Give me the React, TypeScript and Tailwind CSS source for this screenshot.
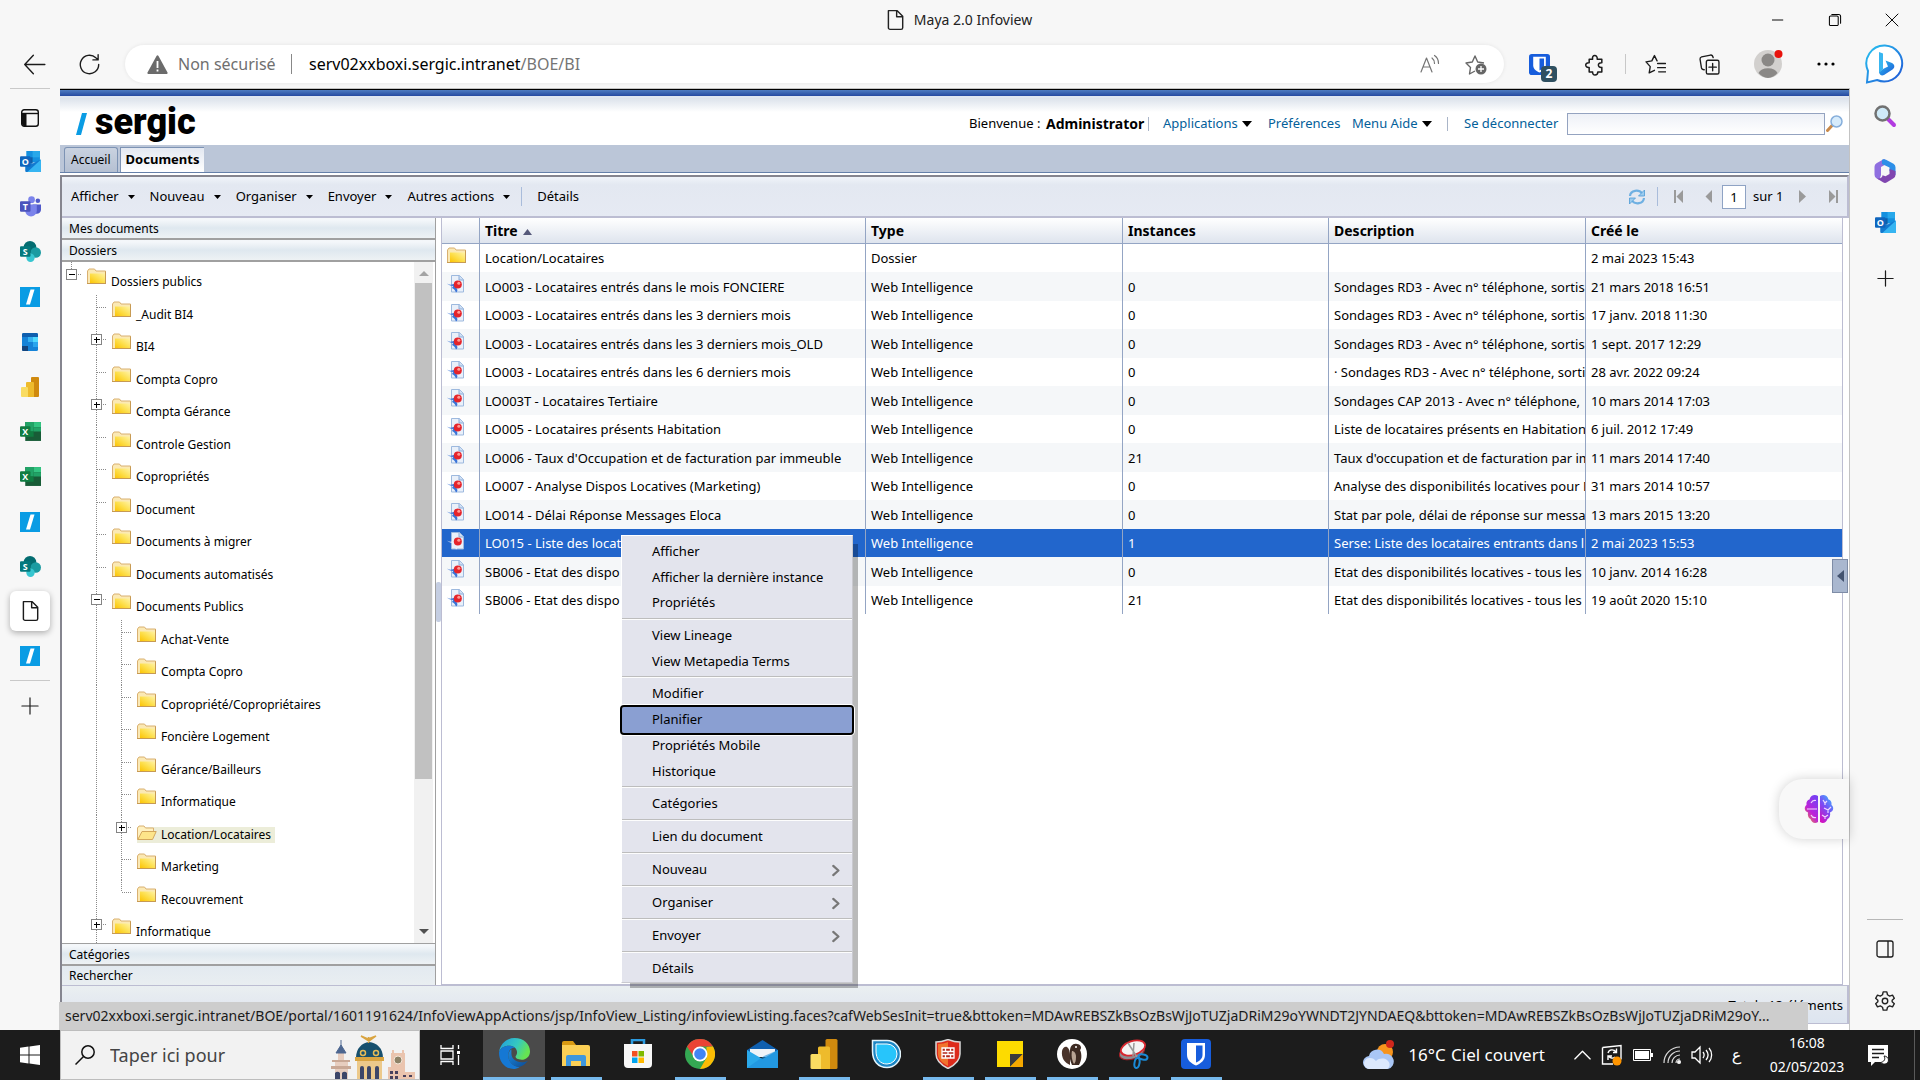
import React from "react";

type NodeProps = { label: string; level: number; toggle?: "+" | "-"; last?: boolean; open?: boolean };

const tree: NodeProps[] = [
  { label: "Dossiers publics", level: 0, toggle: "-" },
  { label: "_Audit BI4", level: 1 },
  { label: "BI4", level: 1, toggle: "+" },
  { label: "Compta Copro", level: 1 },
  { label: "Compta Gérance", level: 1, toggle: "+" },
  { label: "Controle Gestion", level: 1 },
  { label: "Copropriétés", level: 1 },
  { label: "Document", level: 1 },
  { label: "Documents à migrer", level: 1 },
  { label: "Documents automatisés", level: 1 },
  { label: "Documents Publics", level: 1, toggle: "-" },
  { label: "Achat-Vente", level: 2 },
  { label: "Compta Copro", level: 2 },
  { label: "Copropriété/Copropriétaires", level: 2 },
  { label: "Foncière Logement", level: 2 },
  { label: "Gérance/Bailleurs", level: 2 },
  { label: "Informatique", level: 2 },
  { label: "Location/Locataires", level: 2, toggle: "+", open: true },
  { label: "Marketing", level: 2 },
  { label: "Recouvrement", level: 2, last: true },
  { label: "Informatique", level: 1, toggle: "+" },
];

const rd3 = "Sondages RD3 - Avec n° téléphone, sortis";
const WI = "Web Intelligence";
const SELECTED = 10;

const rows = [
  ["Location/Locataires", "Dossier", "", "", "2 mai 2023 15:43"],
  ["LO003 - Locataires entrés dans le mois FONCIERE", WI, "0", rd3, "21 mars 2018 16:51"],
  ["LO003 - Locataires entrés dans les 3 derniers mois", WI, "0", rd3, "17 janv. 2018 11:30"],
  ["LO003 - Locataires entrés dans les 3 derniers mois_OLD", WI, "0", rd3, "1 sept. 2017 12:29"],
  ["LO003 - Locataires entrés dans les 6 derniers mois", WI, "0", "· " + rd3, "28 avr. 2022 09:24"],
  ["LO003T - Locataires Tertiaire", WI, "0", "Sondages CAP 2013 - Avec n° téléphone,", "10 mars 2014 17:03"],
  ["LO005 - Locataires présents Habitation", WI, "0", "Liste de locataires présents en Habitation,", "6 juil. 2012 17:49"],
  ["LO006 - Taux d'Occupation et de facturation par immeuble", WI, "21", "Taux d'occupation et de facturation par im", "11 mars 2014 17:40"],
  ["LO007 - Analyse Dispos Locatives (Marketing)", WI, "0", "Analyse des disponibilités locatives pour M", "31 mars 2014 10:57"],
  ["LO014 - Délai Réponse Messages Eloca", WI, "0", "Stat par pole, délai de réponse sur messa", "13 mars 2015 13:20"],
  ["LO015 - Liste des locat", WI, "1", "Serse: Liste des locataires entrants dans l", "2 mai 2023 15:53"],
  ["SB006 - Etat des dispo", WI, "0", "Etat des disponibilités locatives - tous les", "10 janv. 2014 16:28"],
  ["SB006 - Etat des dispo", WI, "21", "Etat des disponibilités locatives - tous les", "19 août 2020 15:10"],
];

const menuGroups = [
  ["Afficher", "Afficher la dernière instance", "Propriétés"],
  ["View Lineage", "View Metapedia Terms"],
  ["Modifier", "Planifier", "Propriétés Mobile", "Historique"],
  ["Catégories"],
  ["Lien du document"],
  ["Nouveau"],
  ["Organiser"],
  ["Envoyer"],
  ["Détails"],
];
const submenus = ["Nouveau", "Organiser", "Envoyer"];

const statusUrl =
  "serv02xxboxi.sergic.intranet/BOE/portal/1601191624/InfoViewAppActions/jsp/InfoView_Listing/infoviewListing.faces?cafWebSesInit=true&bttoken=MDAwREBSZkBsOzBsWjJoTUZjaDRiM29oYWNDT2JYNDAEQ&bttoken=MDAwREBSZkBsOzBsWjJoTUZjaDRiM29oY...";

/* ---------- small icons ---------- */

const Line = ({ d, size = 20, w = 1.3, className = "" }: { d: string; size?: number; w?: number; className?: string }) => (
  <svg width={size} height={size} viewBox="0 0 20 20" fill="none" stroke="currentColor" strokeWidth={w} strokeLinecap="round" strokeLinejoin="round" className={"shrink-0 " + className}>
    <path d={d} />
  </svg>
);

const Caret = ({ w = 7 }: { w?: number }) => (
  <svg width={w} height={w === 7 ? 4 : 6} viewBox="0 0 10 6" preserveAspectRatio="none" className="shrink-0">
    <path d="M0 0h10L5 6z" fill="#000" />
  </svg>
);

const Folder = () => (
  <svg width="19" height="17" viewBox="0 0 19 17" className="shrink-0">
    <defs>
      <linearGradient id="fold" x1="0" y1="1" x2="1" y2="0">
        <stop offset="0" stopColor="#fcc200" />
        <stop offset=".5" stopColor="#fddf4c" />
        <stop offset="1" stopColor="#fff3a6" />
      </linearGradient>
    </defs>
    <path d="M.5 15.500V3l1.500-2h5.500L9 3h9.500v12.500z" fill="#fbe9b4" stroke="#d9b071" />
    <path d="M3 5.500h15v10H3z" fill="url(#fold)" />
    <path d="M0 15.500h19M18.500 3.500v12" stroke="#c79a53" />
  </svg>
);

const FolderOpen = () => (
  <svg width="20" height="16" viewBox="0 0 20 16" className="shrink-0">
    <path d="M.5 14.500V3l1.500-2h5l1.500 2h8v4" fill="#fff1c0" stroke="#d9b071" />
    <path d="M.8 14.500L5 6.500h14.200L15.500 14.500z" fill="#fde58a" stroke="#d3a75c" />
  </svg>
);

const WebiIcon = ({ selected }: { selected: boolean }) => (
  <svg width="19" height="19" viewBox="0 0 19 19">
    <path d="M4.500.5H12.500l4 4v12.500h-12z" fill="#e9f0fa" stroke="#9db9de" />
    <path d="M12 .5V5h4.500" fill="#cfdff3" stroke="#8cadd9" />
    <path d="M0 8.500c3 1.800 5.500 1.500 8-.5-.5 2 0 3.500 1.500 5 1.500 2 1 3.500-.5 4.500-.8-2.500-2-3.500-4-4.500l1.200-2C3.500 11 1.500 10 0 8.500z" fill={selected ? "#e8effb" : "#3a74d8"} />
    <circle cx="10.800" cy="9.500" r="4" fill="#e5242b" />
    <circle cx="11.800" cy="8.200" r="1.500" fill="#ff9a94" />
  </svg>
);

const SergicIcon = () => (
  <svg width="20" height="20" viewBox="0 0 20 20">
    <path d="M0 0h20v20H0z" fill="#0a9ce4" />
    <path d="M10.500 2.500h4L10 17.500H6z" fill="#fff" />
  </svg>
);

const Badge = ({ fill, letter, x = 0 }: { fill: string; letter: string; x?: number }) => (
  <>
    <rect x={x} y="5" width="10" height="10" rx="1" fill={fill} />
    <text x={x + 5} y="13" textAnchor="middle" fontSize="8.500" fontWeight="700" fontFamily="Open Sans, sans-serif" fill="#fff">
      {letter}
    </text>
  </>
);

const OutlookIcon = () => (
  <svg width="21" height="21" viewBox="0 0 20 20">
    <path d="M6 0h13v11H6z" fill="#1490df" />
    <path d="M12 0h7v6h-7z" fill="#28a8ea" />
    <path d="M6 6h6v6H6z" fill="#0f5ea8" />
    <path d="M5 11l7 1 8-4v11a1 1 0 0 1-1 1H6a1 1 0 0 1-1-1z" fill="#1279cf" />
    <path d="M20 8v11a1 1 0 0 1-1 1H7z" fill="#36b5f2" />
    <Badge fill="#0f65bd" letter="O" />
  </svg>
);

const TeamsIcon = () => (
  <svg width="21" height="21" viewBox="0 0 20 20">
    <circle cx="11" cy="3.500" r="3.200" fill="#7b83eb" />
    <circle cx="17" cy="4.500" r="2.200" fill="#5059c9" />
    <path d="M12 8h8v5a4 4 0 0 1-4 4h-4z" fill="#5059c9" />
    <path d="M5 8h11v6a5.500 5.500 0 0 1-11 0z" fill="#7b83eb" />
    <Badge fill="#4b53bc" letter="T" />
  </svg>
);

const SharepointIcon = () => (
  <svg width="21" height="21" viewBox="0 0 20 20">
    <circle cx="9.500" cy="6" r="6" fill="#036c70" />
    <circle cx="15" cy="11" r="5" fill="#1a9ba1" />
    <circle cx="10" cy="16" r="4" fill="#37c6d0" />
    <Badge fill="#03787c" letter="S" />
  </svg>
);

const ExcelIcon = () => (
  <svg width="21" height="21" viewBox="0 0 20 20">
    <path d="M5 1h15v18H5z" fill="#185c37" />
    <path d="M5 1h8v5H5zM5 6h8v4H5z" fill="#21a366" />
    <path d="M13 1h7v5h-7z" fill="#33c481" />
    <path d="M13 6h7v4h-7z" fill="#21a366" />
    <path d="M5 10h8v5H5z" fill="#107c41" />
    <Badge fill="#107c41" letter="X" />
  </svg>
);

const BluesIcon = () => (
  <svg width="16" height="18" viewBox="0 0 16 18">
    <rect width="16" height="18" rx="1.500" fill="#1583d8" />
    <path d="M0 1.500A1.500 1.500 0 0 1 1.500 0h13A1.500 1.500 0 0 1 16 1.500V4H0z" fill="#0f5fae" />
    <path d="M6 4h5v5H6z" fill="#35b1f1" />
    <path d="M11 4h5v5h-5z" fill="#50d9ff" />
    <path d="M11 9h5v5h-5z" fill="#2aa5ee" />
    <path d="M0 13h6v5H1.500A1.500 1.500 0 0 1 0 16.500z" fill="#14447d" />
  </svg>
);

const PowerBi = ({ size = 20 }: { size?: number }) => (
  <svg width={size} height={size} viewBox="0 0 20 20">
    <rect x="11" y="0" width="8" height="20" rx="1" fill="#d08a0e" />
    <path d="M6 6a1 1 0 0 1 1-1h6a1 1 0 0 1 1 1v14H6z" fill="#eebb2c" />
    <path d="M1 11a1 1 0 0 1 1-1h5a1 1 0 0 1 1 1v9H2a1 1 0 0 1-1-1z" fill="#f9dc62" />
  </svg>
);

const docPath = "M4 1.500h8L17 6.500V17a1.500 1.500 0 0 1-1.500 1.500h-10A1.500 1.500 0 0 1 4 17zM11.500 1.500V7H17";

const Bitwarden = ({ size }: { size: number }) => (
  <svg width={size} height={size} viewBox="0 0 30 30">
    <rect width="30" height="30" rx="4" fill="#175ddc" />
    <path d="M6 4h18v12c0 5-4 8.500-9 10.500C10 24.500 6 21 6 16z" fill="#fff" />
    <path d="M15 6.500h6.500V16c0 3.500-3 6-6.500 7.500z" fill="#175ddc" />
  </svg>
);

const sideIcons = [OutlookIcon, TeamsIcon, SharepointIcon, SergicIcon, BluesIcon, PowerBi, ExcelIcon, ExcelIcon, SergicIcon, SharepointIcon];

/* ---------- browser chrome ---------- */

const TitleBar = () => (
  <header className="relative flex h-10 shrink-0 items-center justify-center pr-1">
    <div className="flex items-center gap-2 text-sm text-[#222]">
      <Line d={docPath} size={22} />
      <span>Maya 2.0 Infoview</span>
    </div>
    <div className="absolute top-0 right-0 flex h-10 items-center text-black">
      <button aria-label="Réduire" className="flex w-[57px] justify-center">
        <Line d="M3 10h13" size={16} w={1.2} />
      </button>
      <button aria-label="Restaurer" className="flex w-[57px] justify-center">
        <Line d="M3 6.500A1.500 1.500 0 0 1 4.500 5h8A1.500 1.500 0 0 1 14 6.500v9a1.500 1.500 0 0 1-1.500 1.500h-8A1.500 1.500 0 0 1 3 15.500zM6 3h8.500A2.500 2.500 0 0 1 17 5.500V14" size={16} />
      </button>
      <button aria-label="Fermer" className="flex w-[57px] justify-center">
        <Line d="M2.500 2.500l15 15M17.500 2.500l-15 15" size={16} w={1.2} />
      </button>
    </div>
  </header>
);

const AddressBar = () => (
  <div className="flex h-12 shrink-0 items-center text-[#1b1b1b]">
    <button aria-label="Précédent" className="ml-[23px]">
      <Line d="M19 10H1.500M9 2L1.500 10L9 18" size={23} w={1.2} />
    </button>
    <button aria-label="Actualiser" className="ml-8 mr-6">
      <Line d="M18 10a8 8 0 1 1-2.500-5.800L17 5.500M17.500 1.500v4.500h-4.500" size={23} w={1.2} />
    </button>
    <div className="flex h-[38px] flex-1 items-center rounded-full bg-white pr-4 pl-[22px] shadow-[0_0_4px_rgba(0,0,0,0.08)]">
      <svg width="21" height="19" viewBox="0 0 21 19">
        <path d="M9.500 1a1.200 1.200 0 0 1 2 0l9 16.500a1 1 0 0 1-1 1.500h-18a1 1 0 0 1-1-1.500z" fill="#6b6b6b" />
        <path d="M10.500 6v7M10.500 14.500v2" stroke="#fff" strokeWidth="1.800" />
      </svg>
      <span className="ml-[10px] w-[113px] text-base text-[#6f6f6f]">Non sécurisé</span>
      <span className="h-5 w-px bg-[#888]" />
      <div role="textbox" aria-label="Adresse" className="ml-[17px] flex-1 text-base text-black">
        serv02xxboxi.sergic.intranet<span className="text-[#757575]">/BOE/BI</span>
      </div>
      <button aria-label="Lecture à voix haute" className="mr-6 text-[#757575]">
        <Line d="M1 18L6.500 4L12 18M3 13h7M12 4c2 1.500 2.500 3 2.500 5.500M14.500 1.500c3 2 4 4.500 4 8" w={1.2} />
      </button>
      <button aria-label="Ajouter aux favoris" className="text-[#666]">
        <svg width="24" height="24" viewBox="0 0 24 24" fill="none">
          <path d="M11 19l-5.500 3 1-6.500L2 11l6.300-1L11 4l2.700 6 6.300 1" stroke="currentColor" strokeWidth="1.400" strokeLinejoin="round" />
          <circle cx="17" cy="17" r="5.500" fill="currentColor" />
          <path d="M17 14v6M14 17h6" stroke="#fff" strokeWidth="1.300" />
        </svg>
      </button>
    </div>
    <button aria-label="Bitwarden" className="relative ml-[25px] w-7">
      <Bitwarden size={21} />
      <span className="absolute top-3 left-3 flex h-4 w-4 items-center justify-center rounded-sm bg-[#2f5061] text-xs font-bold text-white">2</span>
    </button>
    <button aria-label="Extensions" className="ml-[27px]">
      <Line d="M4.500 5.500H7.500C6.500 1 12 1 11.500 5.500H15.500V8.500C11.500 8 11.500 13 15.500 12.500V16.500H12C12 20 7 20 7.500 16.500H4.500V12.500C.5 13 .5 8 4.500 8.500z" size={23} />
    </button>
    <span className="mr-[19px] ml-[18px] h-5 w-px bg-[#c8c8c8]" />
    <button aria-label="Favoris">
      <Line d="M9 15.500l-5 2.500 1-6L1 7.500l5.500-1L9 1.500l2.500 5M12 9h7.500M12 13h7.500M13 17h6.500" size={21} />
    </button>
    <button aria-label="Collections" className="ml-[33px]">
      <Line d="M7 7.500A1.500 1.500 0 0 1 8.500 6h9A1.500 1.500 0 0 1 19 7.500v10a1.500 1.500 0 0 1-1.500 1.500h-9A1.500 1.500 0 0 1 7 17.500zM13 9v7M9.500 12.500h7M5 15c-2 0-2.500-1-2.700-2L1 5c-.2-1.500.5-2 1.500-2.300L11 1c1.500-.2 2 .5 2.500 2.500" size={21} />
    </button>
    <button aria-label="Profil" className="ml-[34px]">
      <svg width="30" height="30" viewBox="0 0 30 30">
        <circle cx="14" cy="15" r="14" fill="#d2d0ce" />
        <circle cx="14" cy="11" r="6.500" fill="#8a8886" />
        <path d="M4.500 24a10 7 0 0 1 19 0A14 14 0 0 1 14 29a14 14 0 0 1-9.500-5z" fill="#8a8886" />
        <circle cx="24.500" cy="5" r="4" fill="#e8120c" />
      </svg>
    </button>
    <button aria-label="Paramètres et plus" className="ml-[33px]">
      <svg width="18" height="4" viewBox="0 0 18 4">
        <circle cx="2" cy="2" r="1.600" />
        <circle cx="9" cy="2" r="1.600" />
        <circle cx="16" cy="2" r="1.600" />
      </svg>
    </button>
    <button aria-label="Bing" className="mr-[15px] ml-[30px]">
      <svg width="40" height="40" viewBox="0 0 40 40">
        <defs>
          <linearGradient id="bing" x1="0" y1="0" x2="1" y2="1">
            <stop offset="0" stopColor="#28c3f0" />
            <stop offset="1" stopColor="#1f55d6" />
          </linearGradient>
        </defs>
        <path d="M20 1.500a18 18 0 1 1-8 34.500L2 38.500 3 27A18 18 0 0 1 20 1.500z" fill="#fff" stroke="url(#bing)" strokeWidth="2" />
        <path d="M14 8l4 1.500V25l-4 4z" fill="#38b6f0" />
        <path d="M14 28.500l4-3.500 5-2.500-2.500-6 6.500 2.500c3 1.500 3 5 .5 6.500L19 31c-2 1-4 .5-5-2.500z" fill="url(#bing)" />
      </svg>
    </button>
  </div>
);

const LeftRail = () => (
  <nav className="flex w-[60px] shrink-0 flex-col items-center">
    <span className="h-px w-10 bg-[#c9c9c9]" />
    <button aria-label="Onglets" className="mt-2 flex h-[42px] items-center">
      <svg width="18" height="18" viewBox="0 0 18 18" fill="none">
        <rect x=".7" y=".7" width="16.600" height="16.600" rx="2.500" stroke="#111" strokeWidth="1.400" />
        <path d="M1 4.500h16" stroke="#111" strokeWidth="1.400" />
        <path d="M1 4.500h4.500V17H3a2 2 0 0 1-2-2z" fill="#111" />
      </svg>
    </button>
    {sideIcons.map((Icon, i) => (
      <button key={i} aria-label={"Onglet " + (i + 1)} className="flex h-[45px] w-10 items-center justify-center">
        <Icon />
      </button>
    ))}
    <button aria-label="Maya 2.0 Infoview" className="my-0.5 flex h-10 w-10 items-center justify-center rounded-md bg-white shadow-[0_2px_6px_rgba(0,0,0,0.3)]">
      <Line d={docPath} size={22} />
    </button>
    <button aria-label="Sergic" className="flex h-[45px] items-center">
      <SergicIcon />
    </button>
    <span className="mt-0.5 h-px w-10 bg-[#c9c9c9]" />
    <button aria-label="Nouvel onglet" className="mt-4">
      <Line d="M10 1v18M1 10h18" size={18} />
    </button>
  </nav>
);

const RightRail = () => (
  <aside className="flex w-[71px] shrink-0 flex-col items-center border-l border-[#c3c3c3]">
    <button aria-label="Rechercher" className="mt-4">
      <svg width="24" height="24" viewBox="0 0 24 24" fill="none">
        <path d="M15 15l6 6" stroke="#b23be0" strokeWidth="4" strokeLinecap="round" />
        <circle cx="9.500" cy="9.500" r="7" fill="#cfeaf8" stroke="#717171" strokeWidth="2.500" />
      </svg>
    </button>
    <button aria-label="Microsoft 365" className="mt-[30px]">
      <svg width="24" height="26" viewBox="0 0 24 26">
        <path d="M11 1L3.500 5.200A4 4 0 0 0 1.500 8.700v8a4 4 0 0 0 2 3.500l3 1.700L8 17V9l8-4.500z" fill="#8f6fe0" />
        <path d="M9 1.800a4 4 0 0 1 4 0l7.500 4a4 4 0 0 1 2 3.400V17l-6-4V9.500L9 6z" fill="#2d8fe8" />
        <path d="M22.500 13v4a4 4 0 0 1-2 3.300L14 24.300a4 4 0 0 1-4 0l-6.500-4c4 .8 6-1 6-3l3 1 4-2.300V11z" fill="#8046b0" />
      </svg>
    </button>
    <button aria-label="Outlook" className="mt-7">
      <OutlookIcon />
    </button>
    <button aria-label="Personnaliser" className="mt-9">
      <Line d="M10 2v16M2 10h16" size={19} />
    </button>
    <span className="mt-auto h-px w-9 bg-[#b7b7b7]" />
    <button aria-label="Masquer la barre" className="mt-[19px]">
      <Line d="M4 2h12a2 2 0 0 1 2 2v12a2 2 0 0 1-2 2H4a2 2 0 0 1-2-2V4a2 2 0 0 1 2-2zM13 2v16" />
    </button>
    <button aria-label="Paramètres" className="mt-[31px] mb-[18px]">
      <svg width="22" height="22" viewBox="0 0 24 24" fill="none" stroke="#222" strokeWidth="1.500" strokeLinejoin="round">
        <path d="M10 2h4l.7 3.200 2.400 1.400 3.100-1 2 3.500L19.800 11.300v1.400l2.400 2.200-2 3.500-3.100-1-2.400 1.400L14 22h-4l-.7-3.200-2.400-1.400-3.100 1-2-3.500 2.400-2.200v-1.400L1.800 9.100l2-3.500 3.100 1 2.400-1.400z" />
        <circle cx="12" cy="12" r="3" />
      </svg>
    </button>
  </aside>
);

/* ---------- portal ---------- */

const PortalHeader = () => (
  <>
    <div className="h-px bg-[#c3c3c3]" />
    <div className="h-px bg-black" />
    <div className="h-1.5 bg-linear-to-b from-[#4e7cc0] to-[#2549a0]" />
    <div className="h-0.5 bg-[#dfe6f0]" />
    <div className="flex h-[47px] items-center bg-linear-to-b from-[#dbe2eb] via-white via-30% to-white pr-1.5 pl-4 text-[13px]">
      <a href="#" className="flex items-center gap-2">
        <svg width="11" height="22" viewBox="0 0 11 22" className="mt-1">
          <path d="M6 0h5L5 22H0z" fill="#0a9ce4" />
        </svg>
        <span className="font-['Roboto'] text-4xl leading-10 font-black text-black">sergic</span>
      </a>
      <div className="ml-auto flex items-center pt-1 text-[#03609a]">
        <span className="w-[77px] text-black">Bienvenue :</span>
        <b className="w-[102px] text-sm text-black">Administrator</b>
        <span className="h-[14px] w-px bg-[#aab5c8]" />
        <button className="flex w-[103px] items-center gap-1 pl-[14px]">
          Applications <Caret w={10} />
        </button>
        <a href="#" className="ml-4 w-[84px]">Préférences</a>
        <button className="flex w-[95px] items-center gap-1">
          Menu Aide <Caret w={10} />
        </button>
        <span className="h-[14px] w-px bg-[#aab5c8]" />
        <a href="#" className="ml-4 w-[103px]">Se déconnecter</a>
        <input aria-label="Rechercher" className="h-[22px] w-[258px] border border-[#94a3c0] bg-linear-to-b from-[#eef1f7] to-white px-1" />
        <button aria-label="Lancer la recherche" className="ml-px">
          <svg width="17" height="17" viewBox="0 0 17 17" fill="none">
            <path d="M1.500 15.500L6.500 10" stroke="#c98a4b" strokeWidth="3" strokeLinecap="round" />
            <circle cx="10.500" cy="6.500" r="5.500" fill="#d6ebfb" stroke="#86aedb" strokeWidth="1.500" />
          </svg>
        </button>
      </div>
    </div>
    <div className="flex h-7 items-end gap-0.5 border-b border-[#6580a9] bg-[#bbc6d8] pl-1">
      <button className="h-[25px] rounded-t-[3px] border border-b-0 border-[#7d93b4] bg-linear-to-b from-[#c9d2e0] to-[#b5c0d2] px-1.5 text-xs text-black">Accueil</button>
      <button className="h-[25px] border-t border-l border-[#7d93b4] bg-linear-to-b from-[#e3e8f1] to-white px-[5px] text-[13px] font-bold text-black">Documents</button>
    </div>
    <div className="h-0.5 bg-white" />
  </>
);

const toolbarMenus = ["Afficher", "Nouveau", "Organiser", "Envoyer", "Autres actions"];

const PageArrow = ({ label, d }: { label: string; d: string }) => (
  <button aria-label={label}>
    <svg width="9" height="13" viewBox="0 0 9 13" fill="#9a9a9a">
      <path d={d} />
    </svg>
  </button>
);

const Toolbar = () => (
  <div className="flex h-[43px] shrink-0 items-center border-t-2 border-r-2 border-b-2 border-t-[#85858f] border-r-[#bcbdd2] border-b-[#bcbdd2] bg-linear-to-b from-[#f0f4f9] via-[#e3e8f1] via-20% to-[#e6eaf3] pr-[3px] pl-[9px] text-[13px] text-black">
    <div className="flex items-center gap-[15px]">
      {toolbarMenus.map((m) => (
        <button key={m} className="flex items-center gap-[9px]">
          {m} <Caret />
        </button>
      ))}
      <span className="-ml-1 h-[19px] w-px bg-[#a9bcdb]" />
      <button>Détails</button>
    </div>
    <div className="ml-auto flex items-center">
      <button aria-label="Actualiser la liste">
        <svg width="18" height="16" viewBox="0 0 18 16" fill="none">
          <path d="M2 7C2.500 1 11 0 14 4.500M16 9c-.5 6-9 7-12 2.500" stroke="#6fb0e2" strokeWidth="2.200" />
          <path d="M16.500 1v6h-6zM1.500 15V9h6z" fill="#9bcbee" stroke="#4c9bd6" strokeWidth=".8" />
        </svg>
      </button>
      <span className="mr-4 ml-[11px] h-[19px] w-px bg-[#a9bcdb]" />
      <div className="flex items-center gap-[21px]">
        <PageArrow label="Première page" d="M0 0h2v13H0zM9 0v13L2.500 6.500z" />
        <PageArrow label="Page précédente" d="M8 0v13L1.500 6.500z" />
      </div>
      <input aria-label="Page" defaultValue="1" className="mr-[7px] ml-[9px] h-6 w-6 border border-[#8fa3c4] bg-white text-center" />
      <span className="w-[46px]">sur 1</span>
      <div className="flex items-center gap-[21px] pr-1.5">
        <PageArrow label="Page suivante" d="M0 0v13L7 6.500z" />
        <PageArrow label="Dernière page" d="M0 0v13L6.500 6.500zM7 0h2v13H7z" />
      </div>
    </div>
  </div>
);

const Guide = ({ toggle, root, last, plain }: { toggle?: string; root?: boolean; last?: boolean; plain?: boolean }) => (
  <svg width="25" height="100%" className="shrink-0" shapeRendering="crispEdges">
    <line x1="9.500" x2="9.500" y1="0" y2={root || last ? 12 : "100%"} stroke="#8a8a8a" strokeDasharray="1 1" />
    {!plain && <line x1="10" x2="20" y1="12.500" y2="12.500" stroke="#8a8a8a" strokeDasharray="1 1" />}
    {toggle && (
      <>
        <rect x="4.500" y="7.500" width="10" height="10" fill="#fff" stroke="#848484" />
        <path d={toggle === "+" ? "M7 12.500h6M9.500 10v6" : "M7 12.500h6"} stroke="#000" />
      </>
    )}
  </svg>
);

const TreeRow = ({ label, level, toggle, last, open }: NodeProps) => (
  <li className="flex h-8 odd:h-[33px]">
    {level > 0 && <span className="w-[25px] shrink-0" />}
    {level === 2 && <Guide plain />}
    <Guide toggle={toggle} root={level === 0} last={last} />
    <a href="#" className={open ? "mt-3 flex h-4 gap-[5px] bg-[#ecedd9] pr-1 leading-4" : "flex gap-[5px] leading-4"}>
      {open ? (
        <span className="-mt-0.5 w-[19px]">
          <FolderOpen />
        </span>
      ) : (
        <span className="mt-1.5 w-[19px]">
          <Folder />
        </span>
      )}
      <span className={open ? "" : "mt-3"}>{label}</span>
    </a>
  </li>
);

const PanelTitle = ({ children }: { children: React.ReactNode }) => (
  <button className="flex h-[22px] shrink-0 items-end border-b-2 border-[#a0a0a0] bg-linear-to-b from-[#f4f7fa] from-10% via-[#dfe8ef] via-50% to-[#eef2f4] pb-px pl-[7px] leading-4">
    {children}
  </button>
);

const LeftPanel = () => (
  <div className="flex w-[374px] shrink-0 flex-col border-r border-[#a0a0a0] bg-white text-xs text-black">
    <PanelTitle>Mes documents</PanelTitle>
    <PanelTitle>Dossiers</PanelTitle>
    <div className="flex min-h-0 flex-1">
      <ul className="flex-1 overflow-hidden">
        {tree.map((n, i) => (
          <TreeRow key={i} {...n} />
        ))}
      </ul>
      <div className="mr-0.5 flex w-[19px] flex-col items-center bg-[#f1f1f1]">
        <svg width="10" height="21" viewBox="0 0 10 21">
          <path d="M0 14l5-5 5 5z" fill="#a3a3a3" />
        </svg>
        <span className="h-[496px] w-[17px] bg-[#c1c1c1]" />
        <svg width="10" height="21" viewBox="0 0 10 21" className="mt-auto">
          <path d="M0 7l5 5 5-5z" fill="#505050" />
        </svg>
      </div>
    </div>
    <span className="h-px shrink-0 bg-[#a0a0a0]" />
    <PanelTitle>Catégories</PanelTitle>
    <button className="flex h-[19px] shrink-0 items-center bg-linear-to-b from-[#e3eaf0] to-[#e9eef1] pl-[7px] leading-4">Rechercher</button>
  </div>
);

const columns = ["Titre", "Type", "Instances", "Description", "Créé le"];

const DocTable = () => (
  <table className="w-full table-fixed border-separate border-spacing-0 text-left text-[13px] text-black">
    <colgroup>
      <col className="w-[38px]" />
      <col className="w-[386px]" />
      <col className="w-[257px]" />
      <col className="w-[206px]" />
      <col className="w-[257px]" />
      <col />
    </colgroup>
    <thead>
      <tr className="h-[26px] bg-linear-to-b from-white to-[#dde3ed] text-sm leading-5">
        <th aria-label="Icône" className="border-r border-b border-[#94a5c4] p-0" />
        {columns.map((c) => (
          <th key={c} className="border-r border-b border-[#94a5c4] p-0 pl-[5px] last:border-r-0">
            {c}
            {c === "Titre" && (
              <svg width="9" height="6" viewBox="0 0 9 6" className="ml-[5px] inline-block align-middle">
                <path d="M0 6l4.500-6L9 6z" fill="#55597a" />
              </svg>
            )}
          </th>
        ))}
      </tr>
    </thead>
    <tbody>
      {rows.map((r, i) => (
        <tr key={i} className={i === SELECTED ? "h-7 bg-[#2266cc] text-white" : "h-7 even:h-[29px] even:bg-[#f5f7f9]"}>
          <td className="border-r border-[#94a5c4] p-0 pt-[3px] pl-[5px] align-top">{i === 0 ? <Folder /> : <WebiIcon selected={i === SELECTED} />}</td>
          {r.map((cell, j) => (
            <td key={j} className="overflow-hidden border-r border-[#94a5c4] p-0 pl-[5px] leading-5 whitespace-nowrap last:border-r-0">
              {cell}
            </td>
          ))}
        </tr>
      ))}
    </tbody>
  </table>
);

const ContextMenu = () => (
  <div role="menu" className="absolute top-[317px] left-[179px] z-20 w-[232px] border border-[#c9c9cf] border-t-white border-l-white bg-[#e3e4ed] text-[13px] text-black shadow-[7px_7px_0_-2px_rgba(0,0,0,0.27)]">
    {menuGroups.map((g, i) => (
      <div key={i} className="border-[#fdfdfd] pt-[3px] not-first:border-t">
        <div className={i < menuGroups.length - 1 ? "border-b border-[#bdbdbd] pb-0.5" : ""}>
          {g.map((item) => (
            <button
              key={item}
              role="menuitem"
              className={
                item === "Planifier"
                  ? "relative flex h-[26px] w-full items-center rounded-[2px] bg-[#8a9fd2] pl-[30px] ring-[3px] ring-white outline-2 outline-black"
                  : "flex h-[26px] w-full items-center pr-[9px] pl-[30px] even:h-[25px]"
              }
            >
              {item}
              {submenus.includes(item) && <Line d="M5 3l8 7-8 7" size={13} w={3.5} className="ml-auto text-[#777]" />}
            </button>
          ))}
        </div>
      </div>
    ))}
  </div>
);

const Portal = () => (
  <main className="relative flex min-w-0 flex-1 flex-col bg-white">
    <PortalHeader />
    <div className="flex min-h-0 flex-1 flex-col border-l-2 border-[#85858f]">
      <Toolbar />
      <div className="flex min-h-0 flex-1 bg-white pr-1.5">
        <LeftPanel />
        <div className="flex w-[5px] shrink-0 flex-col justify-center">
          <span className="h-10 rounded-xs bg-[#c5cee2]" />
        </div>
        <section className="relative min-w-0 flex-1 border-r border-b border-l border-[#bcbdd2]">
          <DocTable />
          <ContextMenu />
        </section>
      </div>
      <footer className="mb-1.5 flex h-[39px] shrink-0 items-center justify-end border-t border-r-2 border-b border-[#bcbdd2] bg-linear-to-b from-[#eaeff1] via-[#e3e8f0] to-[#dde5f0] pt-0.5 pr-1 text-[13px] text-black">Total : 13 éléments</footer>
    </div>
    <button aria-label="Ouvrir le panneau" className="absolute top-[471px] right-px flex h-[34px] w-4 items-center justify-center border border-[#7e8ca6] bg-[#a9b7cf]">
      <svg width="7" height="12" viewBox="0 0 7 12">
        <path d="M7 0v12L0 6z" fill="#43536f" />
      </svg>
    </button>
    <button aria-label="Assistant" className="absolute top-[691px] right-0 flex h-[60px] w-[70px] items-center rounded-l-3xl bg-[#f8f8f8] pl-[25px] shadow-[0_0_12px_rgba(0,0,0,0.18)]">
      <svg width="30" height="30" viewBox="0 0 30 30" fill="none">
        <defs>
          <linearGradient id="brainL" x1=".6" y1="0" x2="0" y2="1">
            <stop offset="0" stopColor="#7b3ff2" />
            <stop offset=".5" stopColor="#c022d8" />
            <stop offset="1" stopColor="#f0a020" />
          </linearGradient>
          <linearGradient id="brainR" x1=".8" y1="0" x2=".2" y2="1">
            <stop offset="0" stopColor="#3fb4ff" />
            <stop offset=".5" stopColor="#7a4cf5" />
            <stop offset="1" stopColor="#d312c0" />
          </linearGradient>
        </defs>
        <path d="M14 2v26c-3 2-6 1-7.500-3-2.500-1-3-4-2.500-6.500-4-1.500-4-5.500-1.500-7.500-.5-3.500 1-5 3-5.500C6.500 1 11 0 14 2z" fill="url(#brainL)" />
        <path d="M16 2v26c3 2 6 1 7.500-3 2.500-1 3-4 2.500-6.500 4-1.500 4-5.500 1.500-7.500.5-3.500-1-5-3-5.500C23.500 1 19 0 16 2z" fill="url(#brainR)" />
        <path d="M3 15h10M7 9c1-2 3-3 5-2.500M7 21c1 2 3 3 5 2.500M19 6l2 3 2-2M21 9v2M20 14l4 2 3-3M24 16v3M18 21l3 2 3-2M21 23v2" stroke="#f0d8ff" strokeWidth="1.200" />
      </svg>
    </button>
    <div role="status" className="absolute right-[41px] bottom-0 -left-px h-7 overflow-hidden bg-[#cdcdcd] pl-[6px] text-sm leading-7 whitespace-nowrap text-[#1a1a1a]">
      {statusUrl}
    </div>
  </main>
);

/* ---------- windows taskbar ---------- */

const EdgeIcon = () => (
  <svg width="31" height="31" viewBox="0 0 30 30">
    <defs>
      <linearGradient id="edgeTop" x1="0" y1="0" x2="1" y2=".4">
        <stop offset="0" stopColor="#1f9be0" />
        <stop offset=".6" stopColor="#35c9c0" />
        <stop offset="1" stopColor="#66e352" />
      </linearGradient>
      <linearGradient id="edgeBot" x1="0" y1="0" x2="1" y2="1">
        <stop offset="0" stopColor="#1b8ade" />
        <stop offset="1" stopColor="#0c4a94" />
      </linearGradient>
    </defs>
    <path d="M0 14C1 5 8 0 15 0c9 0 15 6 15 13 0 5-4 8-8 8-4 0-6-1.500-6-3 0-1 1.500-1.500 1.500-4C17.500 10 14 7.500 10 7.500 5 7.500 1 10 0 14z" fill="url(#edgeTop)" />
    <path d="M0 14c1-4 5-6.500 10-6.500 2 0 4 .7 5.500 2C11 9 9 13 9 17c0 6 5 11 11 11-2 1.500-4 2-6 2C6 30 0 23 0 14z" fill="#1578d4" />
    <path d="M12 11c-2 1.500-3 4-3 6 0 7 6 12 12 10.500 3-1 5-3 7-5.500-8 4-16-.5-16-7z" fill="url(#edgeBot)" />
  </svg>
);

const ExplorerIcon = () => (
  <svg width="28" height="26" viewBox="0 0 28 26">
    <path d="M0 2a2 2 0 0 1 2-2h9l3 4H0z" fill="#d99a12" />
    <path d="M0 4h26a2 2 0 0 1 2 2v19H0z" fill="#fbcf55" />
    <path d="M4 25V16a2 2 0 0 1 2-2h16a2 2 0 0 1 2 2v9h-5v-5H9v5z" fill="#3f97dd" />
  </svg>
);

const StoreIcon = () => (
  <svg width="30" height="30" viewBox="0 0 30 30">
    <path d="M9 6V1h12v5" fill="none" stroke="#2c9be0" strokeWidth="2.500" />
    <path d="M1 5h28v20a4 4 0 0 1-4 4H5a4 4 0 0 1-4-4z" fill="#f7f7f7" />
    <path d="M9 12h5.500v5.500H9z" fill="#f25022" />
    <path d="M15.500 12H21v5.500h-5.500z" fill="#7fba00" />
    <path d="M9 18.500h5.500V24H9z" fill="#00a4ef" />
    <path d="M15.500 18.500H21V24h-5.500z" fill="#ffb900" />
  </svg>
);

const ChromeIcon = () => (
  <svg width="30" height="30" viewBox="0 0 30 30">
    <circle cx="15" cy="15" r="15" fill="#34a853" />
    <path d="M2 7.500A15 15 0 0 1 28 7.500H15L9 18z" fill="#ea4335" />
    <path d="M28 7.500A15 15 0 0 1 15 30l6.500-11V8z" fill="#fbbc05" />
    <circle cx="15" cy="15" r="7.500" fill="#fff" />
    <circle cx="15" cy="15" r="5.800" fill="#4285f4" />
  </svg>
);

const MailIcon = () => (
  <svg width="31" height="28" viewBox="0 0 31 28">
    <path d="M0 10L15.500 0 31 10v5H0z" fill="#0f5fae" />
    <path d="M3 9h25v8H3z" fill="#eef3f8" />
    <path d="M0 10l15.500 9L31 10v18H0z" fill="#2ba9ea" />
    <path d="M0 28l17-12L31 10v18z" fill="#1d8ddb" opacity=".6" />
  </svg>
);

const DropIcon = () => (
  <svg width="30" height="30" viewBox="0 0 30 30">
    <path d="M1.500 1.500H16a13.500 13.500 0 0 1 0 27C7 28.500 1.500 22 1.500 12z" fill="#1c86c4" stroke="#e3f4fc" strokeWidth="1.500" />
    <path d="M5 5h11a10 10 0 0 1 0 20C9 25 5 20 5 12z" fill="#27c5fb" stroke="#fff" strokeWidth="1" />
  </svg>
);

const ShieldIcon = () => (
  <svg width="26" height="30" viewBox="0 0 26 30">
    <path d="M1 3c5 0 8-1 12-2.500C17 2 20 3 25 3v12c0 7-5 11-12 14.500C6 26 1 22 1 15z" fill="#dd2b1c" stroke="#d9d9d9" strokeWidth="1.500" />
    <path d="M3 5c4 0 7-1 10-2v24C7 24 3 20 3 15z" fill="#f0742d" />
    <path d="M7 9h12v10H7zM7 12.500h12M7 15.500h12M10.500 9v3.500M15.500 9v3.500M13 12.500v3M10.500 15.500V19M15.500 15.500V19" fill="#b3271a" stroke="#fff" strokeWidth="1.300" />
  </svg>
);

const NoteIcon = () => (
  <svg width="26" height="26" viewBox="0 0 26 26">
    <path d="M0 0h26v26H0z" fill="#fddb00" />
    <path d="M13 26V13h13z" fill="#3b3b3b" />
    <path d="M13 26L26 13v13z" fill="#f5a800" />
  </svg>
);

const BeaverIcon = () => (
  <svg width="30" height="30" viewBox="0 0 30 30">
    <circle cx="15" cy="15" r="15" fill="#fff" />
    <path d="M13 26c-5-2-9-7-8-14 .5-3 3-5 5-4 3 2 3 7 3 10z" fill="#4a342b" />
    <path d="M13 12c0-5 3-8 7-7 4 .5 5 4 3 6 2 4 2 10-1 15h-7c-2-4-3-9-2-14z" fill="#3d2a22" />
    <path d="M15 12c2 0 4 2 4 6s-1 6-2 7c-2-3-3-9-2-13z" fill="#b8a393" />
    <circle cx="19" cy="8" r="1" fill="#fff" />
  </svg>
);

const SnipIcon = () => (
  <svg width="30" height="30" viewBox="0 0 30 30" fill="none">
    <ellipse cx="13" cy="13" rx="13" ry="7" transform="rotate(-18 13 13)" fill="#8d8d92" stroke="#a31f26" />
    <ellipse cx="14" cy="9" rx="12.500" ry="7" transform="rotate(-18 14 9)" fill="#f4f4f4" stroke="#d8272f" strokeWidth="1.800" />
    <path d="M9 4l9 14M15 4l-1 13" stroke="#999" strokeWidth="1.500" />
    <ellipse cx="24" cy="18" rx="4.500" ry="2.500" transform="rotate(12 24 18)" stroke="#1a8ad6" strokeWidth="2" />
    <ellipse cx="18" cy="24" rx="2.500" ry="5" transform="rotate(10 18 24)" stroke="#1a8ad6" strokeWidth="2" />
  </svg>
);

const WeatherIcon = () => (
  <svg width="32" height="30" viewBox="0 0 32 30">
    <circle cx="22" cy="12" r="8" fill="#f7941d" />
    <circle cx="27" cy="4" r="4" fill="#d0271c" />
    <path d="M7 29a6.500 6.500 0 0 1-1-13 8 8 0 0 1 15-2 7.500 7.500 0 0 1 4 15z" fill="#a9c6f5" />
    <path d="M6 29a5.500 5.500 0 0 1 1-11c3 0 4 1 6 3 3-3 8-3 11-1 4 3 3 8 0 9z" fill="#dce9fd" />
  </svg>
);

const Landmark = () => (
  <svg width="86" height="44" viewBox="0 0 86 44">
    <path d="M5 44V27h3v-9l3-5 3 5v9h4v17z" fill="#e7cdbf" />
    <path d="M6 18l5-8 5 8zM11 5v6" fill="#4c6690" stroke="#4c6690" />
    <path d="M2 25h18v2H2zM1 31h20v3H1z" fill="#c9a896" />
    <path d="M5 44v-6a3 3 0 0 1 5 0v6zM12 44v-6a3 3 0 0 1 5 0v6z" fill="#3c4668" />
    <path d="M26 23C26 13 32 8 39 7c8 1 14 6 14 16z" fill="#17506e" />
    <path d="M38.500 8V2M31 1l7 3 8-3-7 5z" fill="#d9a441" stroke="#d9a441" strokeWidth="1.500" />
    <path d="M25 22h29v4H25z" fill="#d9a441" />
    <circle cx="33" cy="18" r="2.500" fill="none" stroke="#e6bb57" strokeWidth="1.500" />
    <circle cx="46" cy="18" r="2.500" fill="none" stroke="#e6bb57" strokeWidth="1.500" />
    <path d="M27 26h25v18H27z" fill="#ecc98b" />
    <path d="M30 44V33a2 2 0 0 1 4 0v11zM37 44V33a2 2 0 0 1 4 0v11zM45 44V33a2 2 0 0 1 4 0v11z" fill="#3c4668" />
    <path d="M61 44V18h14v26zM62 18v-3h2v3zM72 18v-3h2v3zM58 32h12v12H58zM70 37h15v7H70z" fill="#eac4ae" />
    <circle cx="68" cy="25" r="4" fill="#8d8267" stroke="#f5e6d8" />
    <path d="M60 36h3v3h-3zM65 36h3v3h-3zM60 41h3v3h-3zM65 41h3v3h-3zM73 40h3v2h-3zM79 40h3v2h-3z" fill="#47405c" />
  </svg>
);

const apps = [
  { name: "Edge", icon: <EdgeIcon />, running: true, active: true },
  { name: "Explorateur", icon: <ExplorerIcon />, running: true },
  { name: "Store", icon: <StoreIcon /> },
  { name: "Chrome", icon: <ChromeIcon />, running: true },
  { name: "Courrier", icon: <MailIcon /> },
  { name: "Power BI", icon: <PowerBi size={30} />, running: true },
  { name: "Bureau à distance", icon: <DropIcon /> },
  { name: "Pare-feu", icon: <ShieldIcon />, running: true },
  { name: "Pense-bêtes", icon: <NoteIcon />, running: true },
  { name: "DBeaver", icon: <BeaverIcon />, running: true },
  { name: "Capture", icon: <SnipIcon />, running: true },
  { name: "Bitwarden", icon: <Bitwarden size={30} />, running: true },
];

const Taskbar = () => (
  <footer className="flex h-[50px] shrink-0 items-center bg-[#1c1c1c] text-white">
    <button aria-label="Démarrer" className="flex w-[60px] justify-center">
      <svg width="20" height="20" viewBox="0 0 20 20" fill="#fff">
        <path d="M0 2.800L8.500 1.600v8H0zM9.500 1.400L20 0v9.600H9.500zM0 10.500h8.500v8L0 17.300zM9.500 10.500H20V20L9.500 18.600z" />
      </svg>
    </button>
    <label className="flex h-full w-[360px] items-center border border-[#bdbdbd] bg-[#f2f2f2] pl-[14px] text-[#222]">
      <svg width="20" height="20" viewBox="0 0 20 20" fill="none" stroke="#111" strokeWidth="1.500">
        <circle cx="13" cy="7" r="6.200" />
        <path d="M8.500 11.500L.5 19.500" />
      </svg>
      <input aria-label="Rechercher" placeholder="Taper ici pour" className="ml-[15px] w-[220px] text-lg placeholder:text-[#444]" />
      <span className="mt-auto">
        <Landmark />
      </span>
    </label>
    <button aria-label="Affichage des tâches" className="flex w-[63px] pl-5">
      <svg width="21" height="20" viewBox="0 0 21 20" fill="none" stroke="#fff" strokeWidth="1.300">
        <path d="M1 0v3.500h12V0M1 20v-3.500h12V20M1 6h12v8H1zM18.500 0v4M18.500 10v10" />
        <path d="M17 6h3v3h-3z" fill="#fff" stroke="none" />
      </svg>
    </button>
    {apps.map((a) => (
      <button key={a.name} aria-label={a.name} className={a.active ? "flex h-full w-[62px] flex-col items-center bg-[#4a4a4a]" : "flex h-full w-[62px] flex-col items-center"}>
        <span className="flex flex-1 items-center">{a.icon}</span>
        <span className={a.active ? "h-[3px] w-full bg-[#76b9ed]" : a.running ? "h-[3px] w-[51px] bg-[#76b9ed]" : "h-[3px]"} />
      </button>
    ))}
    <div className="ml-auto flex items-center">
      <button className="flex items-center text-[17px]">
        <WeatherIcon />
        <span className="ml-2 w-12 whitespace-nowrap">16°C</span>
        <span className="w-[123px] text-left whitespace-nowrap">Ciel couvert</span>
      </button>
      <div className="flex items-center gap-[10px]">
        <Line d="M1 14l9-9 9 9" size={17} w={1.6} />
        <svg width="22" height="22" viewBox="0 0 22 22" fill="none" stroke="#fff" strokeWidth="1.400">
          <path d="M1.500 3.500L20 1.500v14M1.500 3.500V20H12" />
          <path d="M7 9c1-4 6-4 8-1M15.500 4.500V8.500H12M14 13c-2 2-5 1-6.500-1M7 16v-4h4" />
          <circle cx="16" cy="17" r="4.500" fill="#ff9500" stroke="none" />
        </svg>
        <svg width="20" height="12" viewBox="0 0 20 12">
          <path d="M.5.5h17v11H.5z" fill="none" stroke="#fff" />
          <path d="M2 2h14v8H2zM18 4h2v4h-2z" fill="#fff" />
        </svg>
        <svg width="18" height="18" viewBox="0 0 18 18" fill="none" stroke="#ddd" strokeWidth="1.200">
          <path d="M1 17A16 16 0 0 1 17 1M5 17A12 12 0 0 1 17 5M9 17a8 8 0 0 1 8-8M13 17a4 4 0 0 1 4-4" />
          <circle cx="16" cy="16" r="1.500" fill="#fff" />
        </svg>
        <svg width="22" height="20" viewBox="0 0 22 20" fill="none" stroke="#fff" strokeWidth="1.300">
          <path d="M1 7h3l5-5v16l-5-5H1zM12 7c1.500 2 1.500 4 0 6M15 5c2.500 3 2.500 7 0 10M18 3c3.500 4 3.500 10 0 14" />
        </svg>
      </div>
      <span className="w-[47px] text-center font-['DejaVu_Sans'] text-base">ع</span>
      <div className="flex w-[94px] flex-col items-center text-sm leading-6">
        <span>16:08</span>
        <span>02/05/2023</span>
      </div>
      <button aria-label="Notifications" className="mr-6 ml-[14px]">
        <svg width="22" height="22" viewBox="0 0 22 22">
          <path d="M0 1h20v17H7l-4 4v-4H0z" fill="#fff" />
          <path d="M4 5.500h12M4 9.500h12M4 13.500h7" stroke="#1c1c1c" strokeWidth="1.400" />
          <path d="M16 12c2 3 0 6-3.500 6.500 3 3 8 1.500 8-2.500 0-2-2-4-4.500-4z" fill="#fff" stroke="#1c1c1c" />
        </svg>
      </button>
      <span className="mr-[5px] h-[50px] w-px bg-[#5a5a5a]" />
    </div>
  </footer>
);

const App = () => {
  return (
    <div className="flex h-screen flex-col overflow-hidden bg-[#f7f7f7] font-['Noto_Sans',sans-serif] text-[#1b1b1b]">
      <TitleBar />
      <AddressBar />
      <div className="flex min-h-0 flex-1">
        <LeftRail />
        <Portal />
        <RightRail />
      </div>
      <Taskbar />
    </div>
  );
};

export default App;
